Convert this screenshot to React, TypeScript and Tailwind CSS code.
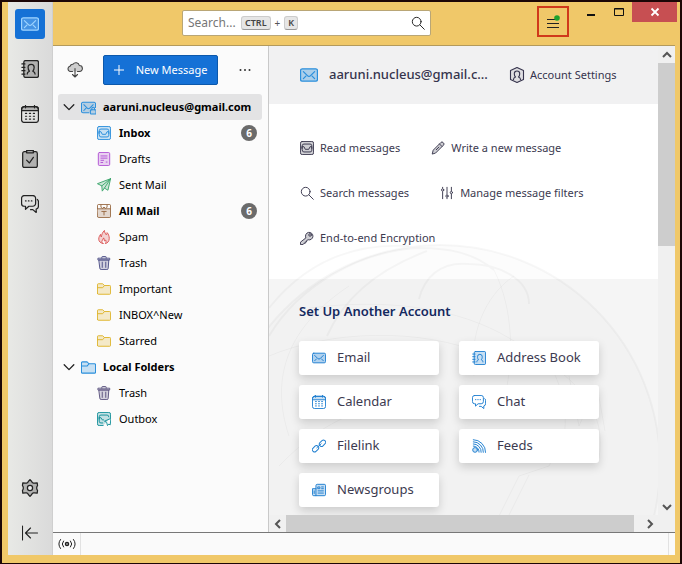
import type { ReactNode } from "react";
import clsx from "clsx";

type IconProps = { className?: string };

function Svg({ className, children }: { className?: string; children: ReactNode }) {
  return (
    <svg viewBox="0 0 16 16" fill="none" stroke="currentColor" strokeWidth="1.100" strokeLinecap="round" strokeLinejoin="round" className={clsx("shrink-0", className)} aria-hidden="true">
      {children}
    </svg>
  );
}

const soft = { fill: "currentColor", fillOpacity: 0.25 };

function MailIcon({ className }: IconProps) {
  return (
    <Svg className={className}>
      <rect x="0.5" y="2.5" width="15" height="11" rx="1.5" fill="currentColor" fillOpacity="0.35" />
      <path d="M3 5l3.6 3.6a2 2 0 0 0 2.8 0L13 5M3 11.2l2.2-2.2M13 11.2L10.800 9" />
    </Svg>
  );
}

function MailLockIcon({ className }: IconProps) {
  return (
    <Svg className={className}>
      <path d="M8.500 13.500H2A1.500 1.500 0 0 1 .5 12V4A1.500 1.500 0 0 1 2 2.500h12A1.500 1.500 0 0 1 15.500 4v4" {...soft} />
      <path d="M3 5l3.600 3.600a2 2 0 0 0 2.800 0L13 5M3 11.200l2.200-2.200" />
      <rect x="10" y="10.500" width="6" height="4.500" rx="0.800" {...soft} />
      <path d="M11.500 10.500V9.300a1.500 1.500 0 0 1 3 0v1.200" />
    </Svg>
  );
}

function AddressBookIcon({ className }: IconProps) {
  return (
    <Svg className={className}>
      <rect x="2.500" y="0.500" width="13" height="15" rx="1.500" {...soft} />
      <path d="M.8 3.500h2.700M.8 6.500h2.700M.8 9.500h2.700M.8 12.500h2.700" />
      <path d="M5.500 12.500c0-1.500.7-2 2-2.500C6.500 9 6.300 8 6.300 6.500a2.700 2.700 0 0 1 5.400 0c0 1.500-.2 2.500-1.200 3.500 1.300.5 2 1 2 2.500" />
    </Svg>
  );
}

function CalendarIcon({ className }: IconProps) {
  return (
    <Svg className={className}>
      <rect x="0.500" y="1.500" width="15" height="14" rx="2.500" />
      <path d="M.5 5V4A2.500 2.500 0 0 1 3 1.500h10A2.500 2.500 0 0 1 15.500 4v1z" {...soft} />
      <path d="M4 .5v2M12 .5v2" />
      <path d="M4 7.500h1M7.500 7.500h1M11 7.500h1M4 10h1M7.500 10h1M11 10h1M4 12.500h1M7.500 12.500h1M11 12.500h1" />
    </Svg>
  );
}

function TaskIcon({ className }: IconProps) {
  return (
    <Svg className={className}>
      <path d="M5 1.500H3A1.500 1.500 0 0 0 1.500 3v11A1.500 1.500 0 0 0 3 15.500h10a1.500 1.500 0 0 0 1.500-1.500V3A1.500 1.500 0 0 0 13 1.500h-2" {...soft} />
      <path d="M5 .5h6v2H5zM5 9l2.500 2.500L11 6.500" />
    </Svg>
  );
}

function ChatIcon({ className }: IconProps) {
  return (
    <Svg className={className}>
      <path d="M3 .5h7.500A2.500 2.500 0 0 1 13 3v4.500A2.500 2.500 0 0 1 10.500 10H7l-3 2.700V10H3A2.500 2.500 0 0 1 .5 7.500V3A2.500 2.500 0 0 1 3 .5z" />
      <path d="M14.500 4c.6.400 1 1 1 2v4a2.500 2.500 0 0 1-2 2.500v3L10.500 13H8.500" />
      <path d="M4 5.300h.5M6.600 5.300h.5M9.200 5.300h.5" />
    </Svg>
  );
}

function GearIcon({ className }: IconProps) {
  return (
    <Svg className={className}>
      <path d="M6.500 2.200 8 .5l1.500 1.700.6 1 .8.400 1.200.1 2.300-.3.300 2.300L14 7.200v1.600l.7 1.500-.3 2.300-2.300-.3-1.200.1-.8.400-.6 1L8 15.500l-1.500-1.700-.6-1-.8-.4-1.200-.1-2.300.3-.3-2.300L2 8.800V7.200l-.7-1.500.3-2.300 2.300.3 1.200-.1.800-.4z" {...soft} />
      <circle cx="8" cy="8" r="2.300" fill="#eee" />
    </Svg>
  );
}

function CollapseIcon({ className }: IconProps) {
  return (
    <Svg className={className}>
      <path d="M.5 1v14M15.500 8h-12M8.500 3l-5 5 5 5" />
    </Svg>
  );
}

function CloudDownIcon({ className }: IconProps) {
  return (
    <Svg className={className}>
      <path d="M5.500 9.500h-2a2.700 2.700 0 0 1-.5-5.300 3 3 0 0 1 3-2 3.500 3.500 0 0 1 6.300 1.300A3 3 0 0 1 12.500 9.500h-2" {...soft} />
      <path d="M8 6.500V15M5.500 12.500 8 15l2.500-2.500" />
    </Svg>
  );
}

function InboxIcon({ className }: IconProps) {
  return (
    <Svg className={className}>
      <rect x="0.500" y="0.500" width="15" height="15" rx="2" {...soft} />
      <path d="M2.500 8.500v-3a2 2 0 0 1 2-2h7a2 2 0 0 1 2 2v3M2.500 6.500h2l1.500 3h4l1.500-3h2v4a2 2 0 0 1-2 2h-7a2 2 0 0 1-2-2z" />
    </Svg>
  );
}

function DraftsIcon({ className }: IconProps) {
  return (
    <Svg className={className}>
      <rect x="1.500" y="0.500" width="13" height="15" rx="1.500" {...soft} />
      <path d="M4.500 4.500h7M4.500 7h7M4.500 9.500h3M10.500 11.500h1M4.500 12h2" />
    </Svg>
  );
}

function SentIcon({ className }: IconProps) {
  return (
    <Svg className={className}>
      <path d="M15.500.8.500 6.500l5 2.500L15.500.8zM15.500.8 12.500 14l-4-2.500-2.500 3.500-.5-6" {...soft} />
      <path d="M8.500 11.500 15.500.8" />
    </Svg>
  );
}

function ArchiveIcon({ className }: IconProps) {
  return (
    <Svg className={className}>
      <path d="M.5 5.500h15V14a1.500 1.500 0 0 1-1.500 1.500H2A1.500 1.500 0 0 1 .5 14z" {...soft} />
      <path d="M.5 5.500V2A1.500 1.500 0 0 1 2 .5h12A1.500 1.500 0 0 1 15.500 2v3.500M4.500 1v2.500l1.500 1.700L8 3.500l2 1.700 1.500-1.700V1M5.500 8.500h5M8 8.500v4" />
    </Svg>
  );
}

function SpamIcon({ className }: IconProps) {
  return (
    <Svg className={className}>
      <path d="M7 15.500C4 15 2 13 2 10.500 2 8 3 6.500 4 5c0 1.500.3 2.300 1 3 .5-3 1-5 3.500-7.500 0 2.500 1.200 3.500 2 5 .8-.6 1-1.300 1-2.500 1.500 1.500 2.500 4 2.500 6.500 0 3.500-2 5.500-4.500 6 1-1.500 1-2.500.5-4-.5.500-1 .8-1.500 1 0-1.500-.3-2.500-1-3.500-.5 2-2 3-2 4.500 0 .8.500 1.500 1.500 2z" {...soft} />
    </Svg>
  );
}

function TrashIcon({ className }: IconProps) {
  return (
    <Svg className={className}>
      <path d="M2.500 4.500h11l-.7 9.600a1.500 1.500 0 0 1-1.500 1.400H4.700a1.500 1.500 0 0 1-1.500-1.400z" {...soft} />
      <path d="M1.500 2.500h13v2h-13zM5.500 2.500V1.500a1 1 0 0 1 1-1h3a1 1 0 0 1 1 1v1M6 7v6M10 7v6" />
    </Svg>
  );
}

function FolderIcon({ className }: IconProps) {
  return (
    <Svg className={className}>
      <path d="M.5 13V3A1 1 0 0 1 1.500 2h5l2 2h6a1 1 0 0 1 1 1v8a1 1 0 0 1-1 1h-13a1 1 0 0 1-1-1z" {...soft} />
      <path d="M.5 6.500h6l2-2.500" />
    </Svg>
  );
}

function OutboxIcon({ className }: IconProps) {
  return (
    <Svg className={className}>
      <path d="M7 15.500H2.500a2 2 0 0 1-2-2v-11a2 2 0 0 1 2-2h11a2 2 0 0 1 2 2v4" {...soft} />
      <path d="M2.500 8V5.500a2 2 0 0 1 2-2h7a2 2 0 0 1 2 2M2.500 6.500h2L6 9h1.500M2.500 7v3.500a2 2 0 0 0 2 2h2M15.500 7.500l-7 3 2.500 1.200 1 3.800 1.500-1.700 1.200.7z" />
    </Svg>
  );
}

function PencilIcon({ className }: IconProps) {
  return (
    <Svg className={className}>
      <path d="m1.500 14.500 1-4L11.300 1.700a1.700 1.700 0 0 1 2.500 0l.5.500a1.700 1.700 0 0 1 0 2.500L5.500 13.500z" {...soft} />
      <path d="m9.800 3.500 2.700 2.700M6 10l3-3" />
    </Svg>
  );
}

function SearchIcon({ className }: IconProps) {
  return (
    <Svg className={className}>
      <circle cx="6.500" cy="6.500" r="5" />
      <path d="m10.200 10.200 5 5" />
    </Svg>
  );
}

function FiltersIcon({ className }: IconProps) {
  return (
    <Svg className={className}>
      <path d="M3 1.500v1M3 6.500v8M8 1.500v8M8 13.500v1M13 1.500v4M13 9.500v5" />
      <circle cx="3" cy="4.500" r="1.300" />
      <circle cx="8" cy="11.500" r="1.300" />
      <circle cx="13" cy="7.500" r="1.300" />
    </Svg>
  );
}

function KeyIcon({ className }: IconProps) {
  return (
    <Svg className={className}>
      <path d="M6.500 7.500a4.300 4.300 0 1 1 2.800 2.500L7.500 11v1.500H6V14H4.500l-1 1.500h-3v-2.300z" {...soft} />
      <circle cx="11.500" cy="4.500" r="1.500" />
    </Svg>
  );
}

function AccountIcon({ className }: IconProps) {
  return (
    <Svg className={className}>
      <path d="M8 .5 14.500 3.500v9L8 15.500l-6.500-3v-9z" fill="currentColor" fillOpacity="0.100" />
      <path d="M4.500 12.500c0-1.500.8-2 2-2.500-.8-.8-1.200-2-1.200-3.300a2.700 2.700 0 0 1 5.400 0c0 1.300-.4 2.500-1.200 3.300 1.200.5 2 1 2 2.500" />
    </Svg>
  );
}

function LinkIcon({ className }: IconProps) {
  return (
    <Svg className={className}>
      <rect x="8" y="2.300" width="8" height="5" rx="2.300" transform="rotate(-45 12 4.800)" />
      <rect x="0" y="8.700" width="8" height="5" rx="2.300" transform="rotate(-45 4 11.200)" />
      <path d="m5.500 10 5-4.500" />
    </Svg>
  );
}

function FeedsIcon({ className }: IconProps) {
  return (
    <Svg className={className}>
      <circle cx="3.500" cy="12.500" r="2.700" {...soft} />
      <path d="M1.500.8a14 14 0 0 1 14 14.500M1.500 3.200a11.500 11.500 0 0 1 11.500 12M1.500 5.600a9 9 0 0 1 9 9.600M1.500 8a6.500 6.500 0 0 1 6.600 7" />
    </Svg>
  );
}

function NewsIcon({ className }: IconProps) {
  return (
    <Svg className={className}>
      <path d="M4.500 14.500V3A1.500 1.500 0 0 1 6 1.500h8A1.500 1.500 0 0 1 15.500 3v10a1.500 1.500 0 0 1-1.500 1.500H2A1.500 1.500 0 0 1 .5 13V6.500h4" {...soft} />
      <path d="M7 4.500h2v2H7zM11 4.500h2M11 6.500h2M7 9h6M7 11.500h6M2.500 9v3" />
    </Svg>
  );
}

function Chevron({ className }: IconProps) {
  return (
    <Svg className={className}>
      <path d="m2.500 5.500 5.500 5.500 5.500-5.500" strokeWidth="1.500" />
    </Svg>
  );
}

const SPACES = [
  { label: "Address Book", Icon: AddressBookIcon },
  { label: "Calendar", Icon: CalendarIcon },
  { label: "Tasks", Icon: TaskIcon },
  { label: "Chat", Icon: ChatIcon },
];

const MAIL_FOLDERS = [
  { name: "Inbox", Icon: InboxIcon, color: "text-[#2b8fdc]", unread: 6 },
  { name: "Drafts", Icon: DraftsIcon, color: "text-[#b255d4]" },
  { name: "Sent Mail", Icon: SentIcon, color: "text-[#3fa86f]" },
  { name: "All Mail", Icon: ArchiveIcon, color: "text-[#9a6c46]", unread: 6 },
  { name: "Spam", Icon: SpamIcon, color: "text-[#dc5656]" },
  { name: "Trash", Icon: TrashIcon, color: "text-[#4f5188]" },
  { name: "Important", Icon: FolderIcon, color: "text-[#dfb52e]" },
  { name: "INBOX^New", Icon: FolderIcon, color: "text-[#dfb52e]" },
  { name: "Starred", Icon: FolderIcon, color: "text-[#dfb52e]" },
];

const LOCAL_FOLDERS = [
  { name: "Trash", Icon: TrashIcon, color: "text-[#5d5480]" },
  { name: "Outbox", Icon: OutboxIcon, color: "text-[#16919a]" },
];

const ACTIONS = [
  { label: "Read messages", Icon: InboxIcon },
  { label: "Write a new message", Icon: PencilIcon },
  { label: "Search messages", Icon: SearchIcon },
  { label: "Manage message filters", Icon: FiltersIcon },
  { label: "End-to-end Encryption", Icon: KeyIcon },
];

const ACCOUNT_TYPES = [
  { label: "Email", Icon: MailIcon },
  { label: "Address Book", Icon: AddressBookIcon },
  { label: "Calendar", Icon: CalendarIcon },
  { label: "Chat", Icon: ChatIcon },
  { label: "Filelink", Icon: LinkIcon },
  { label: "Feeds", Icon: FeedsIcon },
  { label: "Newsgroups", Icon: NewsIcon },
];

type Folder = { name: string; Icon: (props: IconProps) => ReactNode; color: string; unread?: number };

function FolderRow({ folder }: { folder: Folder }) {
  const { name, Icon, color, unread } = folder;
  return (
    <li className="flex h-[26px] items-center gap-2 pr-[5px] pl-[39px]">
      <Icon className={clsx("size-[14px]", color)} />
      <span className={clsx("flex-1", unread && "font-bold")}>{name}</span>
      {unread && (
        <span className="flex size-4 items-center justify-center rounded-full bg-[#6b6b6b] text-[10px] font-bold text-white">{unread}</span>
      )}
    </li>
  );
}

function SpacesBar() {
  return (
    <nav className="flex w-[45px] shrink-0 flex-col items-center gap-[15px] border-r border-[#cfcfcf] bg-linear-to-r from-[#e8e9e6] to-[#dadada] py-[7px] text-[#222]">
      <button aria-label="Mail" className="flex size-[30px] items-center justify-center rounded-[3px] bg-[#1571d6] text-[#9ed4ff]">
        <MailIcon className="size-[18px]" />
      </button>
      {SPACES.map(({ label, Icon }) => (
        <button key={label} aria-label={label} className="flex size-[30px] items-center justify-center">
          <Icon className="size-[18px]" />
        </button>
      ))}
      <button aria-label="Settings" className="mt-auto flex size-[30px] items-center justify-center">
        <GearIcon className="size-[18px]" />
      </button>
      <button aria-label="Collapse" className="flex size-[30px] items-center justify-center">
        <CollapseIcon className="size-4" />
      </button>
    </nav>
  );
}

function TitleBar() {
  return (
    <header className="flex h-[43px] shrink-0 items-start pl-[129px]">
      <div className="mt-2 flex h-[26px] w-[249px] items-center rounded-[2px] border border-[#b9a676] bg-white pr-[5px] pl-[5px]">
        <input aria-label="Search" placeholder="Search..." className="w-[53px] text-[12px] outline-none placeholder:text-[#767676]" />
        <kbd className="rounded-[3px] border border-[#ccc] border-b-[#999] bg-[#e6e6e6] px-[3px] font-[inherit] text-[9px] leading-3 font-semibold text-[#444]">CTRL</kbd>
        <span className="px-1 text-[10px] text-[#555]">+</span>
        <kbd className="rounded-[3px] border border-[#ccc] border-b-[#999] bg-[#e6e6e6] px-[3px] font-[inherit] text-[9px] leading-3 font-semibold text-[#444]">K</kbd>
        <button aria-label="Run search" className="ml-auto text-[#222]">
          <SearchIcon className="size-[14px]" />
        </button>
      </div>
      <button aria-label="Application menu" className="mt-1 ml-auto flex h-[31px] w-8 items-center justify-center border-2 border-[#d0391b]">
        <svg viewBox="0 0 14 14" className="size-[14px]" aria-hidden="true">
          <path d="M1 4.500h12M1 8.500h12M1 12.500h12" stroke="#222" />
          <circle cx="11" cy="3" r="2.800" fill="#1fa12e" />
        </svg>
      </button>
      <button aria-label="Minimize" className="flex h-5 w-9 items-center justify-center pl-2">
        <svg viewBox="0 0 10 10" className="size-[10px]" aria-hidden="true">
          <path d="M1 8h8" stroke="#111" strokeWidth="2" />
        </svg>
      </button>
      <button aria-label="Maximize" className="flex h-5 w-[27px] items-center justify-center">
        <svg viewBox="0 0 12 10" className="h-[10px] w-3" aria-hidden="true">
          <path d="M1.500 1.500h9v7h-9zM1.500 2h9" fill="none" stroke="#111" />
        </svg>
      </button>
      <button aria-label="Close" className="mr-[3px] flex h-5 w-[45px] items-center justify-center bg-[#c74f52]">
        <svg viewBox="0 0 10 10" className="size-[10px]" aria-hidden="true">
          <path d="m1.500 1.500 7 7M8.500 1.500l-7 7" stroke="#fff" strokeWidth="1.800" />
        </svg>
      </button>
    </header>
  );
}

function FolderPane() {
  return (
    <aside className="w-[216px] shrink-0 border-r border-[#c9c9c9] bg-[#fbfbfb] text-[11px] text-black">
      <div className="flex h-12 items-center pr-[17px] pl-[14px]">
        <button aria-label="Get messages" className="text-[#444]">
          <CloudDownIcon className="size-4" />
        </button>
        <button className="ml-5 flex h-[30px] w-[115px] items-center justify-center gap-3 rounded-[2px] border border-[#0c58ab] bg-[#1571d6] text-white">
          <svg viewBox="0 0 10 10" className="size-[10px]" aria-hidden="true">
            <path d="M5 0v10M0 5h10" stroke="currentColor" />
          </svg>
          New Message
        </button>
        <button aria-label="More options" className="ml-auto text-[#333]">
          <svg viewBox="0 0 12 4" className="h-1 w-3" fill="currentColor" aria-hidden="true">
            <circle cx="1.500" cy="2" r="1" />
            <circle cx="6" cy="2" r="1" />
            <circle cx="10.500" cy="2" r="1" />
          </svg>
        </button>
      </div>
      <ul className="mr-[6px] ml-[5px]">
        <li className="flex h-[26px] items-center rounded-[3px] bg-[#e3e3e4] pl-1 font-bold">
          <Chevron className="size-[14px] text-[#222]" />
          <MailLockIcon className="ml-[5px] size-[15px] text-[#2b8fdc]" />
          <span className="ml-[7px]">aaruni.nucleus@gmail.com</span>
        </li>
        {MAIL_FOLDERS.map((folder) => (
          <FolderRow key={folder.name} folder={folder} />
        ))}
        <li className="flex h-[26px] items-center pl-1 font-bold">
          <Chevron className="size-[14px] text-[#222]" />
          <FolderIcon className="ml-[5px] size-[15px] text-[#2b8fdc]" />
          <span className="ml-[7px]">Local Folders</span>
        </li>
        {LOCAL_FOLDERS.map((folder) => (
          <FolderRow key={folder.name} folder={folder} />
        ))}
      </ul>
    </aside>
  );
}

// Faint line-art globe that sits behind the account hub
function Globe() {
  return (
    <svg viewBox="0 0 389 469" preserveAspectRatio="xMinYMin slice" className="pointer-events-none absolute inset-0 size-full" fill="none" stroke="#000" strokeOpacity="0.030" aria-hidden="true">
      <circle cx="171" cy="419" r="220" fill="#000" fillOpacity="0.010" strokeWidth="2" />
      <path strokeWidth="2" d="M0 290C30 240 90 205 150 202c30 0 55 5 75 22M150 253c5-20 20-38 50-35 30 0 60 15 60 40M58 290c20-45 60-70 100-85M0 262c40-50 90-65 140-62" />
      <path d="M40 262c80-10 150 0 200 30s100 60 90 120M0 310c60-25 150-30 220 0M20 390c-20-60 0-110 60-150M225 224c20 40 20 90 10 130M245 230c-30 20-45 60-40 100" />
      <path d="M300 330l10 50 18-40 8 45M270 300c20 30 30 60 25 90l-15 30-30 10-20 40M240 469l20-40M10 420c20-20 60-60 120-60" />
    </svg>
  );
}

function AccountHub() {
  return (
    <div className="relative flex min-h-0 flex-1 flex-col overflow-hidden bg-white">
      <div className="flex h-[58px] shrink-0 items-center bg-[#f1f1f2] pl-[31px] text-[#36344d]">
        <MailIcon className="size-[18px] text-[#2b8fdc]" />
        <h1 className="ml-[11px] min-w-[160px] text-[13px] font-medium" title="aaruni.nucleus@gmail.com">aaruni.nucleus@gmail.c...</h1>
        <button className="ml-5 flex items-center gap-[5px] text-[11px]">
          <AccountIcon className="size-4" />
          Account Settings
        </button>
      </div>
      <div className="flex h-[175px] shrink-0 flex-wrap content-start gap-x-[31px] gap-y-[25px] pt-[34px] pr-10 pl-[31px] text-[11px] text-[#3c3a50]">
        {ACTIONS.map(({ label, Icon }) => (
          <button key={label} className="flex h-5 items-center gap-[6px]">
            <Icon className="size-[14px]" />
            {label}
          </button>
        ))}
      </div>
      <Globe />
      <section className="flex-1 bg-black/4 pt-5 pl-[30px]">
        <h2 className="relative text-[13px] leading-6 font-semibold text-[#14295f]">Set Up Another Account</h2>
        <div className="relative mt-[18px] grid w-[300px] grid-cols-2 gap-x-5 gap-y-[10px]">
          {ACCOUNT_TYPES.map(({ label, Icon }) => (
            <button key={label} className="flex h-[34px] items-center gap-[11px] rounded-[3px] bg-white pl-[13px] text-[13px] text-[#3c3a50] shadow-[0_4px_10px_rgba(0,0,0,0.16)]">
              <Icon className="size-[14px] text-[#1f7fd0]" />
              {label}
            </button>
          ))}
        </div>
      </section>
    </div>
  );
}

function ScrollArrow({ label, className }: { label: string; className?: string }) {
  return (
    <button aria-label={label} className="flex size-[17px] shrink-0 items-center justify-center text-[#555]">
      <svg viewBox="0 0 10 10" className={clsx("size-[10px]", className)} fill="none" stroke="currentColor" strokeWidth="2" aria-hidden="true">
        <path d="m1 3 4 4 4-4" />
      </svg>
    </button>
  );
}

export default function App() {
  return (
    <div className="flex h-screen overflow-hidden border-2 border-b border-[#1c0606] bg-[#f0c869] pb-2 pl-[6px] font-['Noto_Sans','Open_Sans',sans-serif]">
      <SpacesBar />
      <div className="flex min-w-0 flex-1 flex-col">
        <TitleBar />
        <div className="mr-[5px] flex min-h-0 flex-1 border-t border-[#b39a5c]">
          <FolderPane />
          <main className="flex min-w-0 flex-1 flex-col">
            <div className="flex min-h-0 flex-1">
              <AccountHub />
              <div className="flex w-[17px] shrink-0 flex-col bg-[#f0f0f0]">
                <ScrollArrow label="Scroll up" className="rotate-180" />
                <div className="h-[39%] bg-[#cdcdcd]" />
                <span className="flex-1" />
                <ScrollArrow label="Scroll down" />
              </div>
            </div>
            <div className="flex h-[17px] shrink-0 bg-[#f0f0f0] pr-[17px]">
              <ScrollArrow label="Scroll left" className="rotate-90" />
              <div className="mr-[7px] flex-1 bg-[#cdcdcd]" />
              <ScrollArrow label="Scroll right" className="-rotate-90" />
            </div>
          </main>
        </div>
        <footer className="mr-[5px] flex h-[23px] shrink-0 items-stretch border-t border-[#777] bg-[#fafafa]">
          <div className="flex w-7 items-center justify-center border-r border-[#e2e2e2] text-[#222]">
            <svg viewBox="0 0 18 14" className="h-[14px] w-[18px]" fill="none" stroke="currentColor" strokeLinecap="round" aria-label="Online" role="img">
              <circle cx="9" cy="7" r="1.500" strokeWidth="1.500" />
              <path d="M5.500 4a4.500 4.500 0 0 0 0 6M12.500 4a4.500 4.500 0 0 1 0 6M2.500 2.500a7.500 7.500 0 0 0 0 9M15.500 2.500a7.500 7.500 0 0 1 0 9" />
            </svg>
          </div>
          <span className="mr-[6px] flex-1 border-r border-[#e2e2e2]" />
        </footer>
      </div>
    </div>
  );
}
